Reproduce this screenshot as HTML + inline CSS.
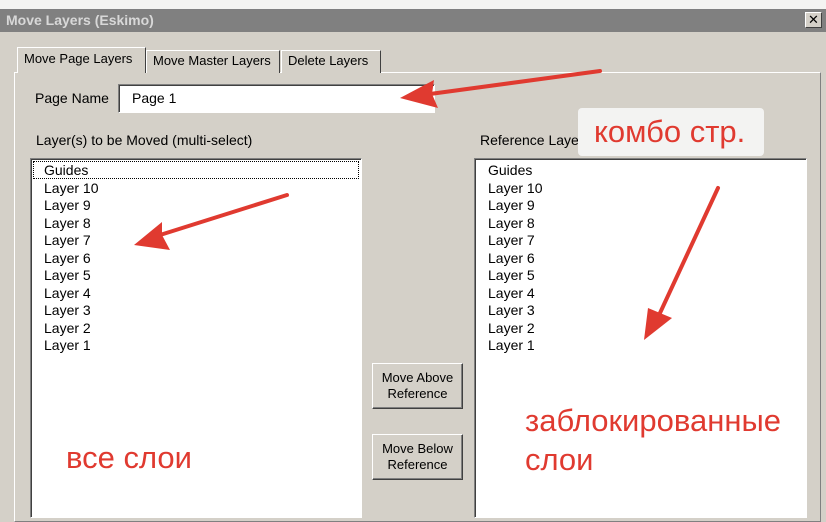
<!DOCTYPE html>
<html><head><meta charset="utf-8"><style>
*{margin:0;padding:0;box-sizing:border-box}
body{width:826px;height:512px;overflow:hidden;background:#d4d0c8;font-family:"Liberation Sans","DejaVu Sans",sans-serif;font-size:14px;color:#000;position:relative}
.abs{position:absolute}
.top{left:0;top:0;width:826px;height:9px;background:#f4f4f2}
.title{left:0;top:9px;width:826px;height:23px;background:#808080;color:#d8d8d8;font-weight:bold;font-size:14px;line-height:23px;padding-left:6px}
.close{left:805px;top:12px;width:17px;height:16px;background:#d4d0c8;border:1px solid;border-color:#fff #404040 #404040 #fff;font-size:13px;font-weight:bold;text-align:center;line-height:14px;color:#000}
.panel{left:14px;top:72px;width:807px;height:450px;border:1px solid;border-color:#fff #808080 #808080 #fff}
.tab{top:50px;height:23px;border:1px solid;border-color:#fff #404040 transparent #fff;border-bottom:none;font-size:13px;line-height:20px;padding:0 6px;background:#d4d0c8}
.list{background:#fff;border:1px solid;border-color:#808080 #fff #fff #808080;box-shadow:inset 1px 1px 0 #404040}
.item{position:absolute;left:13px;line-height:17.5px;font-size:14px}
.btn{left:372px;width:91px;height:46px;border:1px solid;border-color:#fff #404040 #404040 #fff;box-shadow:inset -1px -1px 0 #808080;font-size:13px;text-align:center;line-height:16px;padding-top:6px}
.red{color:#e03a30;font-size:31px}
</style></head><body>
<div class="abs top"></div>
<div class="abs title">Move Layers (Eskimo)</div>
<div class="abs close">✕</div>
<div class="abs panel"></div>
<div class="abs tab" style="left:281px;width:100px">Delete Layers</div>
<div class="abs tab" style="left:146px;width:134px">Move Master Layers</div>
<div class="abs tab" style="left:17px;top:47px;height:26px;width:129px;border-bottom:none;z-index:2;line-height:22px">Move Page Layers</div>
<div class="abs" style="left:35px;top:90px">Page Name</div>
<div class="abs list" style="left:118px;top:84px;width:317px;height:29px"></div>
<div class="abs" style="left:132px;top:90px">Page 1</div>
<div class="abs" style="left:36px;top:132px">Layer(s) to be Moved (multi-select)</div>
<div class="abs" style="left:480px;top:132px">Reference Layer</div>
<div class="abs list" style="left:30px;top:158px;width:332px;height:360px">
<div class="abs" style="left:2px;top:2px;width:326px;height:18px;border:1px dotted #000"></div>
<div class="item" style="top:3px">Guides</div><div class="item" style="top:20.5px">Layer 10</div><div class="item" style="top:38px">Layer 9</div><div class="item" style="top:55.5px">Layer 8</div><div class="item" style="top:73px">Layer 7</div><div class="item" style="top:90.5px">Layer 6</div><div class="item" style="top:108px">Layer 5</div><div class="item" style="top:125.5px">Layer 4</div><div class="item" style="top:143px">Layer 3</div><div class="item" style="top:160.5px">Layer 2</div><div class="item" style="top:178px">Layer 1</div>
</div>
<div class="abs list" style="left:474px;top:158px;width:333px;height:360px">
<div class="item" style="top:3px">Guides</div><div class="item" style="top:20.5px">Layer 10</div><div class="item" style="top:38px">Layer 9</div><div class="item" style="top:55.5px">Layer 8</div><div class="item" style="top:73px">Layer 7</div><div class="item" style="top:90.5px">Layer 6</div><div class="item" style="top:108px">Layer 5</div><div class="item" style="top:125.5px">Layer 4</div><div class="item" style="top:143px">Layer 3</div><div class="item" style="top:160.5px">Layer 2</div><div class="item" style="top:178px">Layer 1</div>
</div>
<div class="abs btn" style="top:363px">Move Above<br>Reference</div>
<div class="abs btn" style="top:434px">Move Below<br>Reference</div>
<div class="abs" style="left:578px;top:108px;width:186px;height:48px;background:#f3f3f2;border-radius:4px"></div>
<div class="abs red" style="left:594px;top:114px">комбо стр.</div>
<div class="abs red" style="left:66px;top:440px">все слои</div>
<div class="abs red" style="left:525px;top:401px;line-height:39px">заблокированные<br>слои</div>
<svg class="abs" style="left:0;top:0" width="826" height="512">
<g stroke="#e03a30" stroke-width="4" fill="#e03a30" stroke-linecap="round">
<line x1="600" y1="71" x2="430" y2="94"/><polygon stroke="none" points="400,98 434,80 432,94 438,108"/>
<line x1="287" y1="195" x2="160" y2="235"/><polygon stroke="none" points="134,245 162,222 162,235 170,250"/>
<line x1="718" y1="188" x2="660" y2="313"/><polygon stroke="none" points="644,340 648,308 660,313 672,318"/>
</g></svg>
</body></html>
